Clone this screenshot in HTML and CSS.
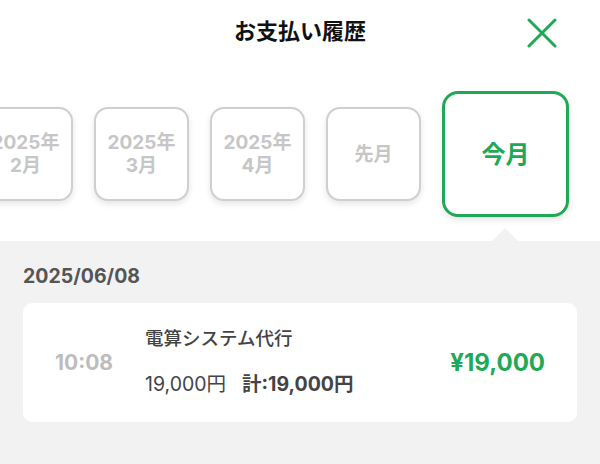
FILE: index.html
```html
<!DOCTYPE html>
<html lang="ja">
  <head>
    <meta charset="UTF-8" />
    <title>お支払い履歴</title>
    <link rel="stylesheet" href="styles.css" />
  </head>
  <body>
    <header class="header">
      <span></span>
      <h1 class="title">お支払い履歴</h1>
      <button class="close" aria-label="閉じる">
        <svg width="30" height="30" viewBox="0 0 30 30">
          <path d="M2 2 L28 28 M28 2 L2 28" stroke="#1fa855" stroke-width="3" stroke-linecap="round" fill="none" />
        </svg>
      </button>
    </header>

    <div class="months">
      <div class="month-row">
        <div class="month"><span>2025年</span><span>2月</span></div>
        <div class="month"><span>2025年</span><span>3月</span></div>
        <div class="month"><span>2025年</span><span>4月</span></div>
        <div class="month"><span>先月</span></div>
        <div class="month active"><span>今月</span></div>
      </div>
      <div class="pointer"></div>
    </div>

    <main class="history">
      <h2 class="date">2025/06/08</h2>
      <div class="card">
        <div class="time">10:08</div>
        <div class="detail">
          <div class="name">電算システム代行</div>
          <div class="price">19,000円<span class="total">計:19,000円</span></div>
        </div>
        <div class="amount">¥19,000</div>
      </div>
    </main>
  </body>
</html>
```

FILE: styles.css
```css
html {
  box-sizing: border-box;
  background: #f2f2f2;
}

*,
*:before,
*:after {
  box-sizing: inherit;
}

body {
  margin: 0;
  padding: 0;
  font-family: "Inter", "Noto Sans CJK JP", sans-serif;
  color: #444;
  overflow: hidden;
  height: 464px;
}

.header {
  display: grid;
  grid-template-columns: 1fr auto 1fr;
  align-items: center;
  height: 66px;
  padding-bottom: 4px;
  background: #fff;
}

.title {
  margin: 0;
  font-size: 22px;
  font-weight: 700;
  color: #111;
  line-height: 1;
}

.close {
  justify-self: end;
  margin-right: 43px;
  margin-top: 4px;
  padding: 0;
  border: 0;
  background: none;
  width: 30px;
  height: 30px;
  display: flex;
}

.months {
  position: relative;
  background: #fff;
  padding: 25px 0 24px;
}

.month-row {
  display: flex;
  align-items: center;
  gap: 21px;
  margin-left: -22px;
}

.month {
  flex: 0 0 95px;
  height: 94px;
  display: flex;
  flex-direction: column;
  align-items: center;
  justify-content: center;
  border: 2px solid #cfcfcf;
  border-radius: 14px;
  background: #fff;
  box-shadow: 0 3px 6px rgba(0, 0, 0, 0.1);
  color: #c6c6c6;
  font-size: 19px;
  font-weight: 700;
  line-height: 23px;
  white-space: nowrap;
}

.month.active {
  flex-basis: 127px;
  height: 126px;
  border: 3px solid #1fa855;
  border-radius: 16px;
  color: #1fa855;
  font-size: 24px;
}

.pointer {
  position: absolute;
  left: 492px;
  bottom: 0;
  width: 0;
  height: 0;
  border-left: 13px solid transparent;
  border-right: 13px solid transparent;
  border-bottom: 13px solid #f2f2f2;
}

.history {
  padding: 22px 23px 0;
}

.date {
  margin: 0 0 14px 0;
  font-size: 19.5px;
  font-weight: 700;
  color: #555;
  line-height: 26px;
}

.card {
  display: flex;
  align-items: center;
  height: 119px;
  background: #fff;
  border-radius: 9px;
}

.time {
  flex: 0 0 122px;
  text-align: center;
  font-size: 21px;
  font-weight: 700;
  color: #bdbdbd;
}

.detail {
  flex: 1;
  display: flex;
  flex-direction: column;
  gap: 22px;
  margin-top: -3px;
}

.name {
  font-size: 18.5px;
  font-weight: 500;
  line-height: 24px;
}

.price {
  font-size: 19.5px;
  line-height: 24px;
}

.total {
  margin-left: 16px;
  font-weight: 700;
}

.amount {
  margin-right: 32px;
  font-size: 24px;
  font-weight: 700;
  color: #1fa855;
}
```
